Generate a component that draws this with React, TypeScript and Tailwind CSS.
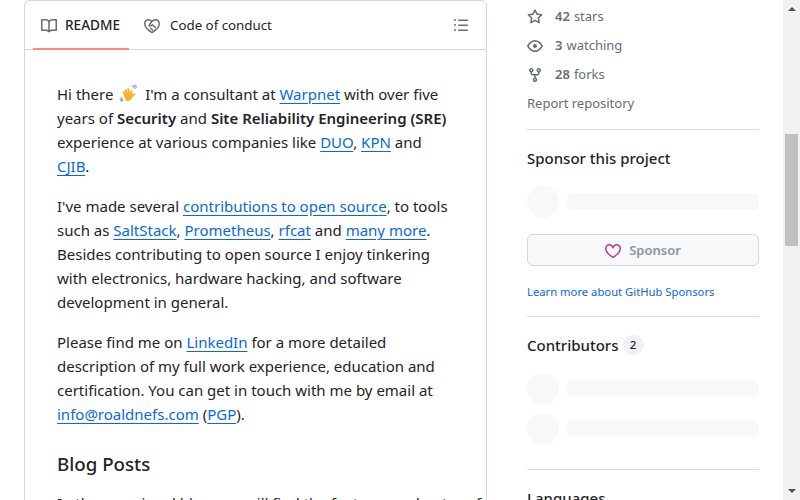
import type { ReactNode } from "react";

function A({ children }: { children: ReactNode }) {
  return <a className="text-[#0969da] underline underline-offset-[2.5px]">{children}</a>;
}

// octicons at their 16px drawing, the 24px ones from the icon package come out too thin
function Octicon({ d, className }: { d: string; className?: string }) {
  return (
    <svg viewBox="0 0 16 16" className={`h-[16px] w-[16px] shrink-0 fill-current ${className ?? ""}`}>
      <path d={d} />
    </svg>
  );
}

const BOOK =
  "M0 1.75A.75.75 0 0 1 .75 1h4.253c1.227 0 2.317.59 3 1.501A3.743 3.743 0 0 1 11.006 1h4.245a.75.75 0 0 1 .75.75v10.5a.75.75 0 0 1-.75.75h-4.507a2.25 2.25 0 0 0-1.591.659l-.622.621a.75.75 0 0 1-1.06 0l-.622-.621A2.25 2.25 0 0 0 5.258 13H.75a.75.75 0 0 1-.75-.75Zm7.251 10.324.004-5.073-.002-2.253A2.25 2.25 0 0 0 5.003 2.5H1.5v9h3.757a3.75 3.75 0 0 1 1.994.574ZM8.755 4.75l-.004 7.322a3.752 3.752 0 0 1 1.992-.572H14.5v-9h-3.495a2.25 2.25 0 0 0-2.25 2.25Z";
const LIST =
  "M5.75 2.5h8.5a.75.75 0 0 1 0 1.500h-8.500a.75.75 0 0 1 0-1.500Zm0 5h8.500a.75.75 0 0 1 0 1.500h-8.500a.75.75 0 0 1 0-1.500Zm0 5h8.500a.75.75 0 0 1 0 1.500h-8.500a.75.75 0 0 1 0-1.500ZM2 14a1 1 0 1 1 0-2 1 1 0 0 1 0 2Zm1-6a1 1 0 1 1-2 0 1 1 0 0 1 2 0ZM2 4a1 1 0 1 1 0-2 1 1 0 0 1 0 2Z";
const STAR =
  "M8 .25a.75.75 0 0 1 .673.418l1.882 3.815 4.21.612a.75.75 0 0 1 .416 1.279l-3.046 2.97.719 4.192a.751.751 0 0 1-1.088.791L8 12.347l-3.766 1.98a.75.75 0 0 1-1.088-.79l.72-4.194L.818 6.374a.75.75 0 0 1 .416-1.28l4.21-.611L7.327.668A.75.75 0 0 1 8 .25Zm0 2.445L6.615 5.5a.75.75 0 0 1-.564.41l-3.097.45 2.24 2.184a.75.75 0 0 1 .216.664l-.528 3.084 2.769-1.456a.75.75 0 0 1 .698 0l2.77 1.456-.53-3.084a.75.75 0 0 1 .216-.664l2.24-2.183-3.096-.45a.75.75 0 0 1-.564-.41L8 2.694Z";
const EYE =
  "M8 2c1.981 0 3.671.992 4.933 2.078 1.27 1.091 2.187 2.345 2.637 3.023a1.62 1.62 0 0 1 0 1.798c-.45.678-1.367 1.932-2.637 3.023C11.67 13.008 9.981 14 8 14c-1.981 0-3.671-.992-4.933-2.078C1.797 10.83.88 9.576.43 8.898a1.62 1.62 0 0 1 0-1.798c.45-.677 1.367-1.931 2.637-3.022C4.33 2.992 6.019 2 8 2ZM1.679 7.932a.12.12 0 0 0 0 .136c.411.622 1.241 1.75 2.366 2.717C5.176 11.758 6.527 12.5 8 12.5c1.473 0 2.825-.742 3.955-1.715 1.124-.967 1.954-2.096 2.366-2.717a.12.12 0 0 0 0-.136c-.412-.621-1.242-1.75-2.366-2.717C10.824 4.242 9.473 3.5 8 3.500c-1.473 0-2.825.742-3.955 1.715-1.124.967-1.954 2.096-2.366 2.717ZM8 10a2 2 0 1 1-.001-3.999A2 2 0 0 1 8 10Z";
const FORK =
  "M5 5.372v.878c0 .414.336.75.75.75h4.5a.75.75 0 0 0 .75-.75v-.878a2.25 2.25 0 1 1 1.5 0v.878a2.25 2.25 0 0 1-2.25 2.25h-1.5v2.128a2.251 2.251 0 1 1-1.5 0V8.5h-1.500A2.25 2.25 0 0 1 3.500 6.250v-.878a2.250 2.250 0 1 1 1.500 0ZM5 3.250a.750.750 0 1 0-1.500 0 .750.750 0 0 0 1.500 0Zm6.750.750a.750.750 0 1 0 0-1.500.750.750 0 0 0 0 1.500Zm-3 8.750a.750.750 0 1 0-1.500 0 .750.750 0 0 0 1.500 0Z";
const HEART =
  "m8 14.25.345.666a.75.75 0 0 1-.69 0l-.008-.004-.018-.01a7.152 7.152 0 0 1-.31-.17 22.055 22.055 0 0 1-3.434-2.414C2.045 10.731 0 8.35 0 5.5 0 2.836 2.086 1 4.25 1 5.797 1 7.153 1.802 8 3.02 8.847 1.802 10.203 1 11.75 1 13.914 1 16 2.836 16 5.5c0 2.85-2.045 5.231-3.885 6.818a22.066 22.066 0 0 1-3.744 2.584l-.018.01-.006.003h-.002ZM4.25 2.500c-1.336 0-2.750 1.164-2.750 3 0 2.150 1.580 4.144 3.365 5.682A20.580 20.580 0 0 0 8 13.393a20.580 20.580 0 0 0 3.135-2.211C12.920 9.644 14.500 7.650 14.500 5.500c0-1.836-1.414-3-2.750-3-1.373 0-2.609.986-3.029 2.456a.749.749 0 0 1-1.442 0C6.859 3.486 5.623 2.500 4.250 2.500Z";

function ConductIcon() {
  return (
    <svg viewBox="0 0 16 16" fill="none" stroke="currentColor" strokeWidth="1.5" strokeLinecap="round" strokeLinejoin="round" className="h-[16px] w-[16px] shrink-0 text-[#656d76]">
      <path d="M8 3.400C6.900 2.300 5.800 1.750 4.600 1.750 2.500 1.750.75 3.300.75 5.750c0 3.700 4.800 7.300 6.700 8.500.350.200.750.200 1.100 0 1.900-1.200 6.700-4.800 6.700-8.500 0-2.450-1.750-4-3.850-4-1.500 0-2.700.800-3.800 1.950L5.300 6.900c-.400.500 0 1.100.600 1.100 1 .100 1.700-.500 2.500-1.200l2.900 2.700" />
      <path d="M8.600 12 6.800 10.300" />
    </svg>
  );
}

function Wave() {
  return (
    <svg viewBox="0 0 24 24" className="mx-[2px] inline-block h-[20px] w-[20px] align-[-4px]">
      <path d="M7 17 4.500 9.500c-.4-1.300 1.400-2 2-.7L8 12 7 7.500c-.3-1.400 1.700-1.900 2.100-.5L10.500 11 10 6c-.1-1.500 1.900-1.700 2.200-.2l1 5.200.8-3.200c.4-1.400 2.300-.9 2.100.5l-.7 4.200 2.400-1.300c1.200-.7 2.300.8 1.300 1.800L15.500 17c-2 4.500-7.500 4.500-8.500 0Z" fill="#f8b229" />
      <path d="M16 2.500c1.600.2 3 1.300 3.500 2.900M18.500 1.500c1.100.3 2 1.100 2.500 2.200M2.500 16c.2 1.600 1.100 2.900 2.500 3.600M1.500 18.500c.4 1 1.100 1.800 2.100 2.300" fill="none" stroke="#6fa5e8" strokeWidth="1.400" strokeLinecap="round" />
    </svg>
  );
}

function Stat({ icon, count, label }: { icon: string; count: string; label: string }) {
  return (
    <div className="flex h-[29px] items-center text-[13px] text-[#656d76]">
      <span className="mr-[12px]">
        <Octicon d={icon} />
      </span>
      <span className="font-semibold">{count}</span>
      <span className="ml-[4px]">{label}</span>
    </div>
  );
}

function Skeleton() {
  return (
    <div className="flex items-center gap-[8px]">
      <div className="h-[32px] w-[32px] rounded-full bg-[#f6f8fa]" />
      <div className="h-[16px] flex-1 rounded-[4px] bg-[#f6f8fa]" />
    </div>
  );
}

export default function App() {
  return (
    <div
      className="flex h-[500px] w-[800px] overflow-hidden bg-white text-[#1f2328]"
      style={{ fontFamily: '"Noto Sans", sans-serif' }}
    >
      {/* README */}
      <div className="ml-[24px] w-[463px] shrink-0">
        <div className="h-[540px] rounded-t-[6px] border border-[#d0d7de]">
          <div className="flex h-[49px] items-center justify-between border-b border-[#d0d7de] pl-[8px] pr-[17px] text-[13.3px]">
            <div className="flex h-full">
              <div className="-mb-px flex h-[49px] w-[96px] items-center gap-[8px] border-b-2 border-[#fd8c73] pl-[8px] pt-[2px] text-[13.6px] font-medium">
                <Octicon d={BOOK} className="text-[#656d76]" />
                README
              </div>
              <div className="ml-[15px] flex items-center gap-[10px] pt-[2px]">
                <ConductIcon />
                Code of conduct
              </div>
            </div>
            <Octicon d={LIST} className="text-[#656d76]" />
          </div>

          <div className="whitespace-nowrap px-[32px] pt-[32px] text-[15px] leading-[24px]">
            <p>
              Hi there <Wave /> I'm a consultant at <A>Warpnet</A> with over five
              <br />
              years of <b className="font-semibold">Security</b> and <b className="font-semibold">Site Reliability Engineering (SRE)</b>
              <br />
              experience at various companies like <A>DUO</A>, <A>KPN</A> and
              <br />
              <A>CJIB</A>.
            </p>
            <p className="mt-[16px]">
              I've made several <A>contributions to open source</A>, to tools
              <br />
              such as <A>SaltStack</A>, <A>Prometheus</A>, <A>rfcat</A> and <A>many more</A>.
              <br />
              Besides contributing to open source I enjoy tinkering
              <br />
              with electronics, hardware hacking, and software
              <br />
              development in general.
            </p>
            <p className="mt-[16px]">
              Please find me on <A>LinkedIn</A> for a more detailed
              <br />
              description of my full work experience, education and
              <br />
              certification. You can get in touch with me by email at
              <br />
              <A>info@roaldnefs.com</A> (<A>PGP</A>).
            </p>
            <h2 className="mt-[25px] text-[18.7px] font-medium leading-[25px]">Blog Posts</h2>
            <p className="mt-[15px]">In the occasional blog you will find the features and notes of</p>
          </div>
        </div>
      </div>

      {/* Sidebar */}
      <div className="ml-[40px] w-[232px] shrink-0 pt-[2px]">
        <Stat icon={STAR} count="42" label="stars" />
        <Stat icon={EYE} count="3" label="watching" />
        <Stat icon={FORK} count="28" label="forks" />
        <div className="flex h-[29px] items-center text-[13px] text-[#656d76]">Report repository</div>

        <div className="mt-[11px] border-t border-[#d8dee4] pt-[16px]">
          <h2 className="text-[15px] font-medium leading-[24px]">Sponsor this project</h2>
          <div className="mt-[16px]">
            <Skeleton />
          </div>
          <button className="mt-[16px] flex h-[32px] w-full items-center justify-center gap-[8px] rounded-[6px] border border-[#d0d7de] bg-[#f6f8fa] pt-px text-[13px] font-semibold text-[#8c959f]">
            <Octicon d={HEART} className="text-[#bf3989]" />
            Sponsor
          </button>
          <div className="mt-[18px] text-[11.25px] leading-[16px] text-[#0969da]">Learn more about GitHub Sponsors</div>
        </div>

        <div className="mt-[16px] border-t border-[#d8dee4] pt-[16px]">
          <h2 className="flex items-center text-[15px] font-medium leading-[24px]">
            Contributors
            <span className="ml-[4px] flex h-[20px] min-w-[21px] items-center justify-center rounded-full bg-[#eff1f3] px-[6px] text-[11.5px] font-medium">2</span>
          </h2>
          <div className="mt-[16px] flex flex-col gap-[8px]">
            <Skeleton />
            <Skeleton />
          </div>
        </div>

        <div className="mt-[24px] border-t border-[#d8dee4] pt-[16px]">
          <h2 className="text-[15px] font-medium leading-[24px]">Languages</h2>
        </div>
      </div>

      {/* Scrollbar */}
      <div className="ml-[24px] flex h-[500px] w-[17px] shrink-0 flex-col items-center bg-[#f1f1f1]">
        <div className="mt-[7px] h-0 w-0 border-x-[4px] border-b-[4px] border-x-transparent border-b-[#505050]" />
        <div className="mt-[123px] h-[112px] w-[13px] bg-[#c1c1c1]" />
        <div className="mt-[243px] h-0 w-0 border-x-[4px] border-t-[4px] border-x-transparent border-t-[#505050]" />
      </div>
    </div>
  );
}
